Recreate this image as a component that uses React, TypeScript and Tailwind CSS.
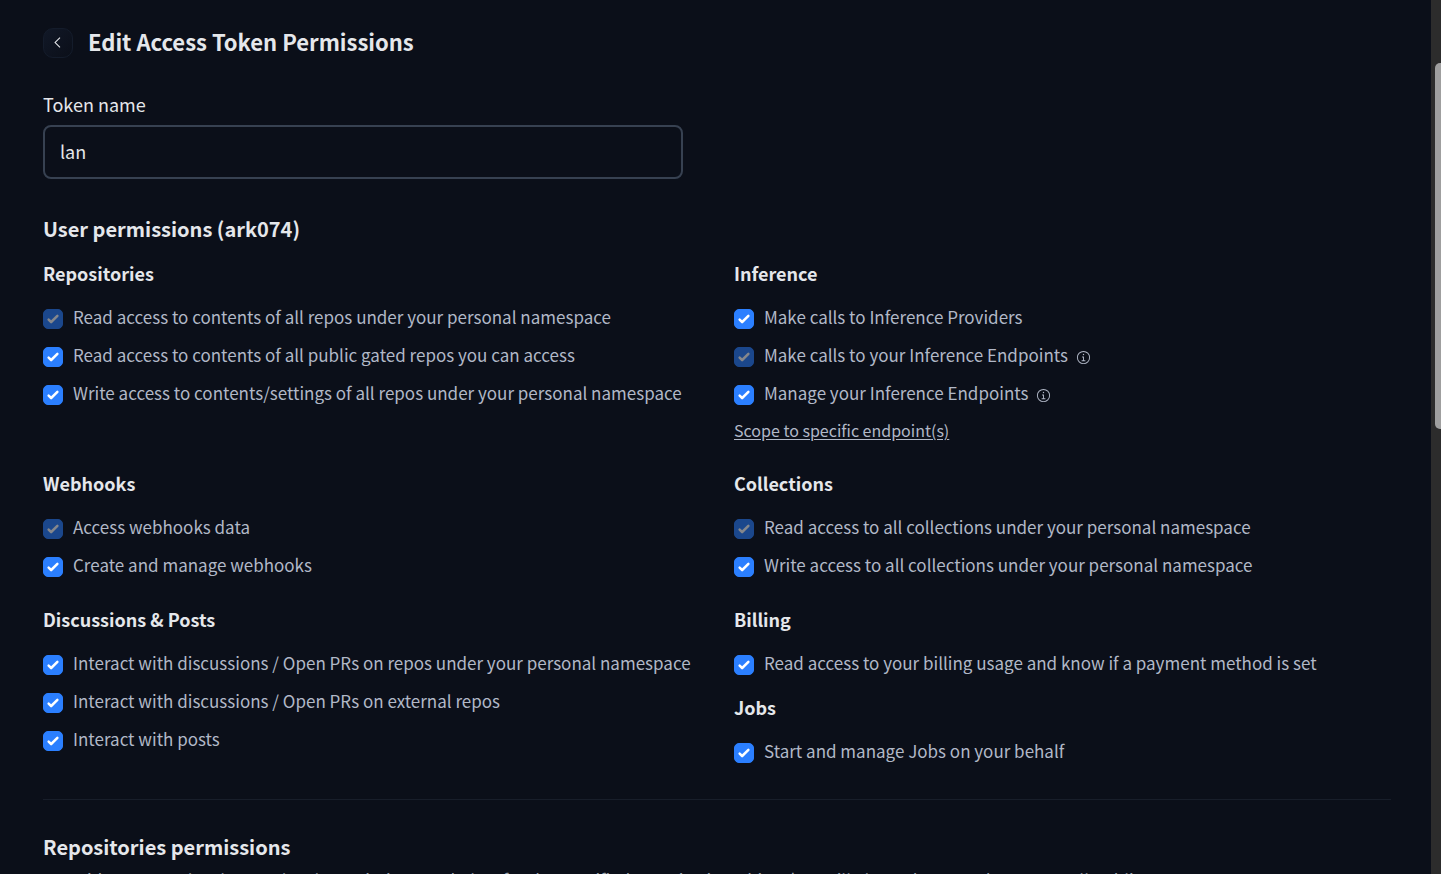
import React from "react";

type Permission = { label: string; locked?: boolean; info?: boolean };

const repositories: Permission[] = [
  { label: "Read access to contents of all repos under your personal namespace", locked: true },
  { label: "Read access to contents of all public gated repos you can access" },
  { label: "Write access to contents/settings of all repos under your personal namespace" },
];
const inference: Permission[] = [
  { label: "Make calls to Inference Providers" },
  { label: "Make calls to your Inference Endpoints", locked: true, info: true },
  { label: "Manage your Inference Endpoints", info: true },
];
const webhooks: Permission[] = [
  { label: "Access webhooks data", locked: true },
  { label: "Create and manage webhooks" },
];
const collections: Permission[] = [
  { label: "Read access to all collections under your personal namespace", locked: true },
  { label: "Write access to all collections under your personal namespace" },
];
const discussions: Permission[] = [
  { label: "Interact with discussions / Open PRs on repos under your personal namespace" },
  { label: "Interact with discussions / Open PRs on external repos" },
  { label: "Interact with posts" },
];
const billing: Permission[] = [
  { label: "Read access to your billing usage and know if a payment method is set" },
];
const jobs: Permission[] = [{ label: "Start and manage Jobs on your behalf" }];

function InfoIcon() {
  return (
    <svg viewBox="0 0 32 32" fill="currentColor" className="ml-2 mt-1 size-[15px] shrink-0" aria-hidden="true">
      <path d="M17 22v-8h-4v2h2v6h-3v2h8v-2h-3z" />
      <path d="M16 8a1.5 1.5 0 1 0 1.5 1.5A1.5 1.5 0 0 0 16 8z" />
      <path d="M16 30a14 14 0 1 1 14-14a14 14 0 0 1-14 14zm0-26a12 12 0 1 0 12 12A12 12 0 0 0 16 4z" />
    </svg>
  );
}

function PermissionRow({ label, locked, info }: Permission) {
  return (
    <li>
      <label className="flex items-center text-[17px] leading-7 text-[#b1b8c7]">
        <span className={locked ? "mr-[10px] mt-1 grid opacity-50" : "mr-[10px] mt-1 grid"}>
          <input
            type="checkbox"
            defaultChecked
            disabled={locked}
            className="peer col-start-1 row-start-1 size-5 appearance-none rounded-[5px] border border-[#374151] checked:border-[#2b7fff] checked:bg-[#2b7fff]"
          />
          <svg
            viewBox="0 0 16 16"
            fill="white"
            className="pointer-events-none invisible col-start-1 row-start-1 size-5 peer-checked:visible"
            aria-hidden="true"
          >
            <path d="M12.207 4.793a1 1 0 010 1.414l-5 5a1 1 0 01-1.414 0l-2-2a1 1 0 011.414-1.414L6.5 9.086l4.293-4.293a1 1 0 011.414 0z" />
          </svg>
        </span>
        <span>{label}</span>
        {info && <InfoIcon />}
      </label>
    </li>
  );
}

function Group({ title, items, children }: { title: string; items: Permission[]; children?: React.ReactNode }) {
  return (
    <section>
      <h3 className="text-lg leading-7 font-semibold">{title}</h3>
      <ul className="mt-4 flex flex-col gap-[10px]">
        {items.map((item) => (
          <PermissionRow key={item.label} {...item} />
        ))}
      </ul>
      {children}
    </section>
  );
}

export default function App() {
  return (
    <div className="flex h-screen overflow-hidden bg-[#0b0f19] font-['Noto_Sans_CJK_SC',sans-serif] text-[#e5e7eb]">
      <main className="min-w-0 flex-1 pt-7 pr-10 pl-[43px]">
        <header className="flex items-center gap-[15px]">
          <button
            type="button"
            aria-label="Back"
            className="flex size-[30px] items-center justify-center rounded-[10px] border border-[#141c2b] bg-linear-to-br from-[#111827] to-[#0b0f19] pr-px pb-px"
          >
            <svg viewBox="0 0 32 32" fill="currentColor" className="size-[17px] shrink-0" aria-hidden="true">
              <path d="M10 16L20 6l1.4 1.4l-8.6 8.6l8.6 8.6L20 26z" />
            </svg>
          </button>
          <h1 className="pb-1 text-[22px] leading-[26px] font-bold">Edit Access Token Permissions</h1>
        </header>

        <form>
          <label htmlFor="token-name" className="mt-8 block text-lg leading-7">
            Token name
          </label>
          <input
            id="token-name"
            type="text"
            defaultValue="lan"
            className="mt-[7px] block h-[54px] w-full max-w-[640px] rounded-lg border-2 border-[#374151] bg-transparent px-[15px] pb-[2px] text-lg outline-none"
          />

          <h2 className="mt-[35px] text-xl leading-[30px] font-semibold">User permissions (ark074)</h2>
          <div className="mt-[15px] grid grid-cols-2 gap-x-[34px] gap-y-[26px]">
            <Group title="Repositories" items={repositories} />
            <Group title="Inference" items={inference}>
              <button
                type="button"
                className="mt-[10px] block text-base leading-[26px] text-[#b1b8c7] underline underline-offset-2"
              >
                Scope to specific endpoint(s)
              </button>
            </Group>
            <Group title="Webhooks" items={webhooks} />
            <Group title="Collections" items={collections} />
            <Group title="Discussions &amp; Posts" items={discussions} />
            <div className="flex flex-col gap-4">
              <Group title="Billing" items={billing} />
              <Group title="Jobs" items={jobs} />
            </div>
          </div>

          <hr className="mt-[34px] border-[#181e2a]" />

          <h2 className="mt-8 text-xl leading-[30px] font-semibold">Repositories permissions</h2>
          <p className="mt-1 text-[17px] leading-7 text-[#9ca3af]">
            Override any user-level or org-level permissions set below for the specified repositories. This token will
            always have read access to all public repos contents.
          </p>
        </form>
      </main>
      <div className="w-[10px] shrink-0 bg-[#2c2c2c] pt-[63px] pl-1" aria-hidden="true">
        <div className="h-[366px] rounded-l-[5px] bg-[#9f9f9f]" />
      </div>
    </div>
  );
}
